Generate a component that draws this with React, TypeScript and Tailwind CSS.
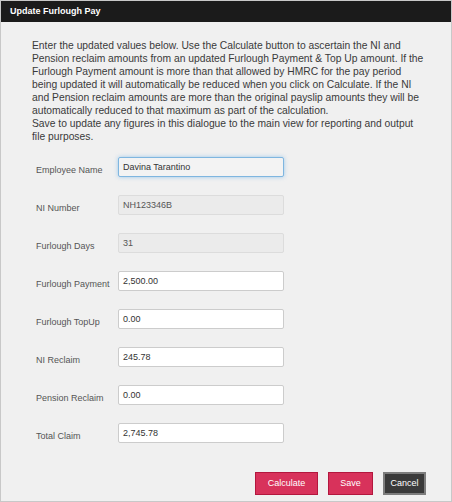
const rows = [
  { label: 'Employee Name', value: 'Davina Tarantino', kind: 'focus' },
  { label: 'NI Number', value: 'NH123346B', kind: 'disabled' },
  { label: 'Furlough Days', value: '31', kind: 'disabled' },
  { label: 'Furlough Payment', value: '2,500.00', kind: 'normal' },
  { label: 'Furlough TopUp', value: '0.00', kind: 'normal' },
  { label: 'NI Reclaim', value: '245.78', kind: 'normal' },
  { label: 'Pension Reclaim', value: '0.00', kind: 'normal' },
  { label: 'Total Claim', value: '2,745.78', kind: 'normal' },
]

const inputStyles: Record<string, string> = {
  focus: 'bg-[#f3f3f3] border-[#7fb6e0] shadow-[0_0_4px_rgba(102,175,233,0.6)]',
  disabled: 'bg-[#ebebeb] border-[#dcdcdc] text-[#555]',
  normal: 'bg-white border-[#cccccc]',
}

export default function App() {
  return (
    <div className="w-[452px] h-[502px] bg-[#f0f0f0] border border-[#c8c8c8] font-['Liberation_Sans',Arial,sans-serif] text-[#333] flex flex-col">
      <div className="h-[21px] bg-[#1b1b1b] text-white font-bold text-[9px] leading-[21px] pl-[9px] shrink-0">
        Update Furlough Pay
      </div>

      <div className="pl-[31px] pr-[10px] pt-[17px]">
        <p className="text-[10.3px] leading-[13px] text-[#3a3a3a]">
          Enter the updated values below. Use the Calculate button to ascertain the NI and
          <br />
          Pension reclaim amounts from an updated Furlough Payment &amp; Top Up amount. If the
          <br />
          Furlough Payment amount is more than that allowed by HMRC for the pay period
          <br />
          being updated it will automatically be reduced when you click on Calculate. If the NI
          <br />
          and Pension reclaim amounts are more than the original payslip amounts they will be
          <br />
          automatically reduced to that maximum as part of the calculation.
          <br />
          Save to update any figures in this dialogue to the main view for reporting and output
          <br />
          file purposes.
        </p>
      </div>

      <div className="flex flex-col gap-[18px] pl-[35px] pt-[14px]">
        {rows.map((r) => (
          <div key={r.label} className="flex items-start">
            <div className="w-[82px] pt-[8px] text-[9px] leading-[11px] text-[#555]">{r.label}</div>
            <div
              className={`w-[166px] h-[20px] border rounded-[2px] px-[4px] text-[9px] leading-[18px] ${inputStyles[r.kind]}`}
            >
              {r.value}
            </div>
          </div>
        ))}
      </div>

      <div className="flex justify-end gap-[10px] pr-[25px] mt-auto mb-[6px]">
        <button className="w-[63px] h-[23px] bg-[#d8325b] border border-[#b3173e] text-white text-[9px]">Calculate</button>
        <button className="w-[45px] h-[23px] bg-[#d8325b] border border-[#b3173e] text-white text-[9px]">Save</button>
        <button className="w-[43px] h-[23px] bg-[#3a3a3a] border-2 border-[#7d7d7d] text-white text-[9px]">Cancel</button>
      </div>
    </div>
  )
}
